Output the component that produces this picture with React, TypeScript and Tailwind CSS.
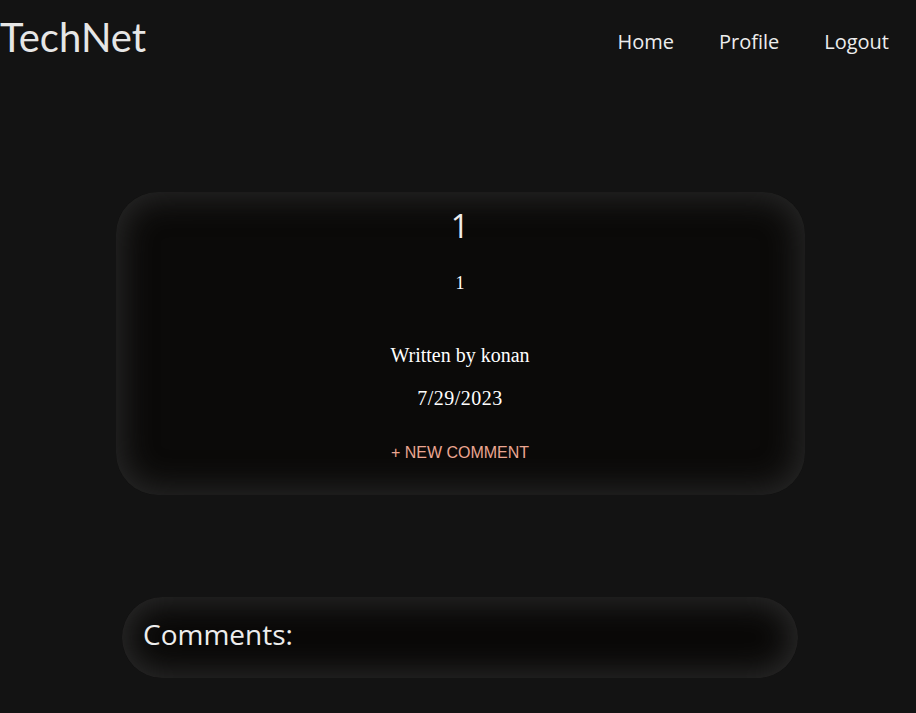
import React from 'react';

const navLinks = ['Home', 'Profile', 'Logout'];

const Header = () => (
  <header className="flex h-[84px] items-start justify-between">
    <h1 className="mt-[12px] font-['Lato',sans-serif] text-[40px] leading-[50px] text-[#e6e6e6]">TechNet</h1>
    <nav className="mt-[27px] flex gap-[45px] pr-[27px] font-['Open_Sans',sans-serif] text-[20px] leading-[30px] text-[#ededed]">
      {navLinks.map((link) => (
        <a key={link} href="#" className="hover:text-white">
          {link}
        </a>
      ))}
    </nav>
  </header>
);

const PostCard = () => (
  <section className="flex w-[689px] flex-col items-center rounded-[42px] bg-[#0b0a09] pt-[12px] pb-[30px] shadow-[inset_0_0_32px_6px_#282828]">
    <h2 className="h-[44px] font-['Open_Sans',sans-serif] text-[32px] leading-[44px] text-[#ededed]">1</h2>
    <p className="mt-[23px] font-['Liberation_Serif',serif] text-[18px] leading-[24px] text-white">1</p>
    <p className="mt-[46px] font-['Liberation_Serif',serif] text-[20px] leading-[28px] text-white">Written by konan</p>
    <p className="mt-[15px] font-['Liberation_Serif',serif] text-[20px] leading-[28px] tracking-[0.5px] text-white">7/29/2023</p>
    <button className="mt-[29px] font-['Liberation_Sans',sans-serif] text-[16px] leading-[24px] text-[#eba691]">
      + NEW COMMENT
    </button>
  </section>
);

const CommentsCard = () => (
  <section className="mt-[102px] flex h-[81px] w-[676px] items-center rounded-[41px] bg-[#0a0908] pl-[21px] pb-[8px] shadow-[inset_0_0_30px_6px_#2a2a2a]">
    <h3 className="font-['Open_Sans',sans-serif] text-[28px] leading-[36px] text-[#ededed]">Comments:</h3>
  </section>
);

export default function App() {
  return (
    <div className="min-h-[713px] bg-[#131313]">
      <Header />
      <main className="flex flex-col items-center pl-[4px] pt-[108px]">
        <PostCard />
        <CommentsCard />
      </main>
    </div>
  );
}
